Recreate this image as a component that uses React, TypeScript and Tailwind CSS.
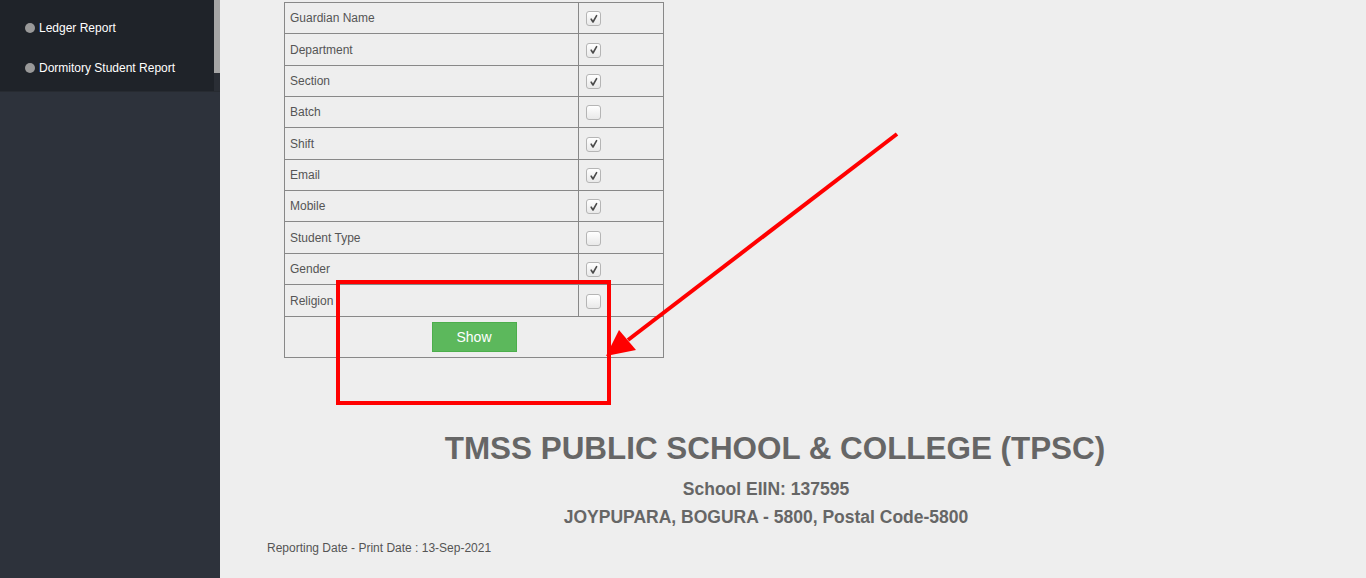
import React from "react";

const rows: { label: string; checked: boolean; h: string }[] = [
  { label: "Guardian Name", checked: true, h: "h-[30px]" },
  { label: "Department", checked: true, h: "h-[32px]" },
  { label: "Section", checked: true, h: "h-[31px]" },
  { label: "Batch", checked: false, h: "h-[31px]" },
  { label: "Shift", checked: true, h: "h-[32px]" },
  { label: "Email", checked: true, h: "h-[31px]" },
  { label: "Mobile", checked: true, h: "h-[31px]" },
  { label: "Student Type", checked: false, h: "h-[32px]" },
  { label: "Gender", checked: true, h: "h-[31px]" },
  { label: "Religion", checked: false, h: "h-[32px]" },
];

function Check({ checked }: { checked: boolean }) {
  return (
    <span className="flex h-[15px] w-[15px] items-center justify-center rounded-[3px] border border-[#b5b5b5] bg-gradient-to-b from-[#ffffff] to-[#e9e9e9]">
      {checked && (
        <svg width="10" height="10" viewBox="0 0 10 10">
          <path d="M2.2 5.2 L4 8 L7.6 1.6" fill="none" stroke="#4a4a4a" strokeWidth="1.6" strokeLinecap="round" strokeLinejoin="round" />
        </svg>
      )}
    </span>
  );
}

export default function App() {
  return (
    <div className="flex h-[578px] w-[1366px] overflow-hidden bg-[#eeeeee] font-['Liberation_Sans',Arial,sans-serif]">
      <aside className="relative flex w-[220px] shrink-0 flex-col bg-[#2d323b]">
        <div className="flex h-[92px] flex-col gap-[22px] border-b border-[#272b31] bg-[#1f2329] pl-[25px] pt-[19px]">
          <div className="flex items-center gap-[4px] text-[12px] text-white">
            <span className="h-[10px] w-[10px] rounded-full bg-[#999999]" />
            <span>Ledger Report</span>
          </div>
          <div className="flex items-center gap-[4px] text-[12px] text-white">
            <span className="h-[10px] w-[10px] rounded-full bg-[#999999]" />
            <span>Dormitory Student Report</span>
          </div>
        </div>
        <div className="absolute right-0 top-0 h-[91px] w-[6px] bg-[#2a2e35]">
          <div className="h-[73px] w-[6px] bg-[#a6a6a6]" />
        </div>
      </aside>

      <main className="relative flex flex-1 flex-col">
        <div className="ml-[64px] mt-[2px] w-[380px] border border-[#888888] text-[12px] text-[#555555]">
          {rows.map((r, i) => (
            <div key={r.label} className={`flex ${r.h} ${i > 0 ? "border-t border-[#888888]" : ""}`}>
              <div className="flex w-[294px] items-center border-r border-[#888888] pl-[5px]">{r.label}</div>
              <div className="flex flex-1 items-center pl-[7px] pt-[1px]">
                <Check checked={r.checked} />
              </div>
            </div>
          ))}
          <div className="flex h-[41px] justify-center border-t border-[#888888] pt-[5px]">
            <button className="h-[30px] w-[85px] border border-[#4cae4c] bg-[#5cb85c] text-[14px] text-white">
              Show
            </button>
          </div>
        </div>

        <div className="ml-[47px] mt-[71px] flex w-[998px] flex-col items-center text-[#666666]">
          <h1 className="ml-[18px] text-[31.4px] font-bold leading-[40px]">TMSS PUBLIC SCHOOL &amp; COLLEGE (TPSC)</h1>
          <div className="mt-[7px] text-[17.5px] font-bold leading-[26px]">School EIIN: 137595</div>
          <div className="mt-[2px] text-[17.5px] font-bold leading-[26px]">JOYPUPARA, BOGURA - 5800, Postal Code-5800</div>
          <div className="mt-[9px] self-start text-[12px] text-[#555555]">Reporting Date - Print Date : 13-Sep-2021</div>
        </div>

        <svg className="pointer-events-none absolute left-0 top-0" width="1146" height="578" viewBox="220 0 1146 578">
          <rect x="338" y="282" width="271" height="121" fill="none" stroke="#ff0000" strokeWidth="4" />
          <line x1="897" y1="134" x2="628" y2="340" stroke="#ff0000" strokeWidth="4" />
          <polygon points="606,356 619,330 636,350" fill="#ff0000" />
        </svg>
      </main>
    </div>
  );
}
